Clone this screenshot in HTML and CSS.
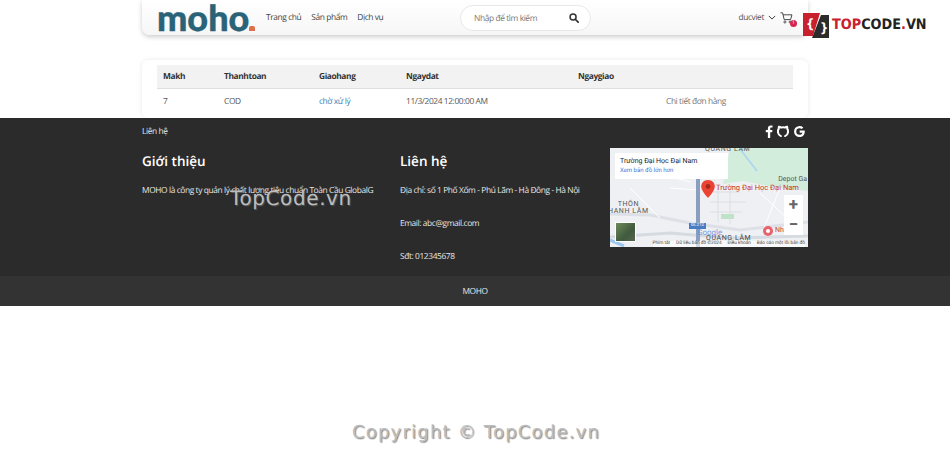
FILE: index.html
```html
<!DOCTYPE html>
<html lang="vi">
<head>
  <meta charset="UTF-8" />
  <meta name="viewport" content="width=device-width, initial-scale=1.0"/>
  <title>MOHO - Đơn hàng</title>
  <link rel="stylesheet" href="styles.css">
</head>
<body>
  <header class="topbar">
    <div class="brand">moho<i class="brand-dot"></i></div>
    <nav class="menu">
      <a href="#">Trang chủ</a>
      <a href="#">Sản phẩm</a>
      <a href="#">Dịch vụ</a>
    </nav>
    <form class="search">
      <span class="search-text">Nhập để tìm kiếm</span>
      <svg class="search-icon" viewBox="0 0 16 16" width="10" height="10">
        <circle cx="6.5" cy="6.5" r="4.8" fill="none" stroke="#333" stroke-width="2.4"/>
        <path d="M10 10l4.6 4.6" stroke="#333" stroke-width="2.8" stroke-linecap="round"/>
      </svg>
    </form>
    <div class="account">
      <span>ducviet</span>
      <svg viewBox="0 0 12 8" width="8" height="5">
        <path d="M1 1.500l5 5 5-5" fill="none" stroke="#333" stroke-width="1.500"/>
      </svg>
      <span class="cart">
        <svg viewBox="0 0 16 15" width="13" height="12">
          <path d="M.5 1h2.600l2 8.500h8l1.700-6H3.700" fill="none" stroke="#333" stroke-width="1.100"/>
          <circle cx="6" cy="12.500" r="1.300" fill="none" stroke="#333"/>
          <circle cx="12.500" cy="12.500" r="1.300" fill="none" stroke="#333"/>
        </svg>
        <b class="cart-count">1</b>
      </span>
    </div>
  </header>

  <main class="orders">
    <table class="order-table">
      <thead>
        <tr>
          <th class="c-id">Makh</th>
          <th class="c-pay">Thanhtoan</th>
          <th class="c-ship">Giaohang</th>
          <th class="c-date">Ngaydat</th>
          <th class="c-due">Ngaygiao</th>
          <th></th>
        </tr>
      </thead>
      <tbody>
        <tr>
          <td>7</td>
          <td>COD</td>
          <td><a class="status" href="#">chờ xử lý</a></td>
          <td>11/3/2024 12:00:00 AM</td>
          <td></td>
          <td><a class="detail" href="#">Chi tiết đơn hàng</a></td>
        </tr>
      </tbody>
    </table>
  </main>

  <footer class="footer">
    <div class="footer-inner">
      <div class="footer-top">
        <a href="#">Liên hệ</a>
        <div class="socials">
          <svg viewBox="0 0 10 16" width="8" height="13">
            <path d="M6.500 16V9h2.400l.4-2.800H6.500V4.500c0-.8.300-1.400 1.400-1.400h1.500V.6C9 .5 8.200.4 7.200.4 5 .4 3.600 1.700 3.600 4.100v2.100H1V9h2.600v7z" fill="#fff"/>
          </svg>
          <svg viewBox="0 0 16 16" width="12" height="12">
            <path d="M5.200 14.800c-2.500-1-4-3.400-4-6.200 0-1.300.4-2.500 1.100-3.400-.2-.9-.1-1.900.3-2.900 1 .1 1.900.5 2.700 1.100a8 8 0 0 1 5.400 0c.8-.6 1.700-1 2.700-1.100.4 1 .5 2 .3 2.900.7.900 1.100 2.100 1.100 3.400 0 2.800-1.500 5.200-4 6.200" fill="none" stroke="#fff" stroke-width="2.600" stroke-linecap="round"/>
          </svg>
          <svg viewBox="0 0 16 16" width="13" height="13">
            <path d="M14.200 6.800H8.200v2.600h3.400c-.4 1.700-1.800 2.700-3.500 2.700a4.100 4.100 0 0 1 0-8.200c1.100 0 2 .4 2.700 1l1.900-1.900A6.800 6.800 0 0 0 8.100 1.200a6.800 6.800 0 1 0 0 13.600c3.700 0 6.400-2.600 6.400-6.800 0-.4 0-.8-.3-1.200z" fill="#fff"/>
          </svg>
        </div>
      </div>
      <div class="footer-cols">
        <section class="col-about">
          <h3>Giới thiệu</h3>
          <p>MOHO là công ty quản lý chất lượng tiêu chuẩn Toàn Cầu GlobalG</p>
        </section>
        <section class="col-contact">
          <h3>Liên hệ</h3>
          <p>Địa chỉ: số 1 Phố Xốm - Phú Lãm - Hà Đông - Hà Nội</p>
          <p>Email: abc@gmail.com</p>
          <p>Sđt: 012345678</p>
        </section>
        <div class="map">
          <svg class="map-ground" viewBox="0 0 198 99" width="198" height="99">
            <rect width="198" height="99" fill="#eef0f3"/>
            <path d="M120 0h78v43l-35-4-30-6-20 3z" fill="#d3eddc"/>
            <path d="M130 1l17 22" fill="none" stroke="#a9d3ef" stroke-width="1.500"/>
            <path d="M0 66l40 1 40 8 50 7 68-8" fill="none" stroke="#dde1e7" stroke-width="3"/>
            <path d="M0 89l60-4 60 5 78-2" fill="none" stroke="#d6dae1" stroke-width="3"/>
            <path d="M30 20l50 14M60 40l28 2M20 40l30 30M150 45l30 28M170 40l-16 40" fill="none" stroke="#fff"/>
            <path d="M88 30v69" fill="none" stroke="#8a9fc0" stroke-width="4"/>
            <path d="M100 44h30M100 54h36M100 64h32M108 40v34M120 40v36" fill="none" stroke="#dcdfe4"/>
            <rect x="111" y="66" width="13" height="5" fill="#bfe3c6"/>
            <path d="M0 92l14 6" stroke="#9cc7ee" stroke-width="3"/>
            <path d="M98 32c-4.500 0-6.800 3.200-6.800 6.600 0 4.500 6.800 11.400 6.800 11.400s6.800-6.900 6.800-11.400C104.800 35.200 102.500 32 98 32z" fill="#ea4335"/>
            <circle cx="98" cy="38.500" r="2.400" fill="#a52714"/>
            <circle cx="158" cy="83" r="5" fill="#e8626d"/>
            <circle cx="158" cy="83" r="2" fill="#fff"/>
          </svg>
          <div class="map-card">
            <span class="map-title">Trường Đại Học Đại Nam</span>
            <a href="#">Xem bản đồ lớn hơn</a>
          </div>
          <span class="map-label pin-label">Trường Đại Học Đại Nam</span>
          <span class="map-label place-top">QUANG LÂM</span>
          <span class="map-label place-left">THÔN<br>HANH LÂM</span>
          <span class="map-label place-low">QUANG LÂM</span>
          <span class="map-label depot">Depot Ga</span>
          <span class="map-label near">Nh</span>
          <span class="map-label shield">ĐL218</span>
          <span class="map-label google">Google</span>
          <div class="map-zoom"><span>+</span><span>−</span></div>
          <div class="map-thumb"></div>
          <div class="map-legal">
            <span>Phím tắt</span><span>Dữ liệu bản đồ ©2024</span><span>Điều khoản</span><span>Báo cáo một lỗi bản đồ</span>
          </div>
        </div>
      </div>
    </div>
    <div class="footer-bar">MOHO</div>
  </footer>

  <!-- site stamps laid over the page -->
  <div class="stamp-logo">
    <svg viewBox="0 0 26 26" width="26" height="26">
      <path d="M0 1h17L10 24H0z" fill="#c8202c"/>
      <path d="M18 3h8v23H9z" fill="#2b2b2b"/>
      <text x="3" y="16" font-size="13" font-weight="700" fill="#fff">{</text>
      <text x="17" y="20" font-size="13" font-weight="700" fill="#fff">}</text>
    </svg>
    <span class="stamp-top">TOP</span><span class="stamp-code">CODE</span><span class="stamp-top">.</span><span class="stamp-code">VN</span>
  </div>
  <div class="stamp-mid">TopCode.vn</div>
  <div class="stamp-copy">Copyright © TopCode.vn</div>
</body>
</html>
```

FILE: styles.css
```css
body {
  margin: 0;
  font-family: 'Open Sans', 'Noto Sans', sans-serif;
  font-size: 8.400px;
  letter-spacing: -0.400px;
  text-rendering: geometricPrecision;
  color: #555;
  background: #fff;
}
a { text-decoration: none; color: inherit; }

.topbar {
  display: flex;
  align-items: center;
  width: 666px;
  height: 35px;
  margin: 0 auto 0 142px;
  padding: 0 15px;
  box-sizing: border-box;
  border-radius: 0 0 8px 8px;
  background: linear-gradient(#fff, #f6f6f6);
  box-shadow: 0 2px 5px rgba(0,0,0,0.2);
}
.brand {
  display: flex;
  align-items: flex-end;
  width: 109px;
  height: 35px;
  font-family: 'Lato', sans-serif;
  font-weight: 900;
  font-size: 36px;
  line-height: 35px;
  letter-spacing: 0;
  color: #2a6278;
  -webkit-text-stroke: 0.4px #2a6278;
}
.brand-dot {
  width: 6px;
  height: 5px;
  margin: 0 0 4px 0;
  border-radius: 2px 2px 0 0;
  background: #e0704a;
}
.menu {
  display: flex;
  gap: 10px;
  color: #444;
  width: 194px;
}
.search {
  display: flex;
  align-items: center;
  justify-content: space-between;
  width: 131px;
  height: 26px;
  margin-top: 1px;
  padding: 0 11px 0 13px;
  box-sizing: border-box;
  border: 1px solid #e8e8e8;
  border-radius: 13px;
  background: #fff;
}
.search-text { color: #777; }
.account {
  display: flex;
  align-items: center;
  gap: 4px;
  margin-left: auto;
  color: #555;
}
.cart { position: relative; display: flex; }
.cart-count {
  position: absolute;
  right: -4px;
  bottom: -3px;
  width: 7px;
  height: 7px;
  border-radius: 50%;
  background: #d4264f;
  color: #fff;
  font-size: 5px;
  line-height: 7px;
  letter-spacing: 0;
  text-align: center;
  font-weight: 400;
}

.orders {
  width: 666px;
  height: 58px;
  margin: 25px 0 0 142px;
  padding-top: 5px;
  box-sizing: border-box;
  border-radius: 6px;
  background: #fff;
  box-shadow: 0 0 5px rgba(0,0,0,0.09);
}
.order-table {
  width: 636px;
  margin-left: 15px;
  border-collapse: collapse;
  table-layout: fixed;
}
.order-table th, .order-table td {
  padding: 0 6px;
  text-align: left;
}
.order-table th {
  height: 23px;
  background: #f2f2f2;
  border-bottom: 1px solid #dedede;
  color: #333;
  font-weight: 700;
}
.order-table td { height: 24px; color: #555; }
.c-id { width: 49px; }
.c-pay { width: 83px; }
.c-ship { width: 75px; }
.c-date { width: 160px; }
.c-due { width: 76px; }
.status { color: #3a85b8; }
.detail { color: #777; }

.footer {
  height: 188px;
  background: #2b2b2b;
  color: #e6e6e6;
}
.footer-inner {
  width: 666px;
  height: 158px;
  margin-left: 142px;
}
.footer-top {
  display: flex;
  justify-content: space-between;
  align-items: center;
  height: 26px;
  margin-bottom: 4px;
}
.socials {
  display: flex;
  align-items: center;
  gap: 4px;
  margin-right: 2px;
}
.footer-cols {
  display: flex;
}
.col-about { width: 258px; }
.col-contact { width: 210px; }
.footer h3 {
  margin: 4px 0 14px;
  font-size: 13.500px;
  line-height: 19px;
  font-weight: 600;
  letter-spacing: 0;
  color: #fff;
}
.footer p {
  margin: 0 0 21px;
  line-height: 12px;
}
.footer-bar {
  height: 30px;
  line-height: 31px;
  background: #333;
  text-align: center;
}

/* map widget: everything inside sits on the map canvas */
.map {
  position: relative;
  width: 198px;
  height: 99px;
  overflow: hidden;
  letter-spacing: 0;
}
.map-ground { display: block; }
.map-card {
  position: absolute;
  left: 5px;
  top: 5px;
  width: 113px;
  height: 26px;
  padding: 4px 0 0 5px;
  box-sizing: border-box;
  background: #fff;
  color: #222;
  font-family: 'Roboto', sans-serif;
  font-size: 7px;
  line-height: 9px;
}
.map-title { display: block; }
.map-card a { display: block; font-size: 6px; color: #3a78d8; }
.map-label {
  position: absolute;
  color: #555;
  font-family: 'Roboto', sans-serif;
  font-size: 7px;
  line-height: 7px;
  white-space: nowrap;
}
.pin-label { left: 106px; top: 36px; color: #c5392c; font-size: 7.500px; }
.place-top { left: 95px; top: -2px; letter-spacing: 0.6px; }
.place-left { left: -2px; top: 53px; letter-spacing: 0.6px; text-align: center; }
.place-low { left: 96px; top: 87px; letter-spacing: 0.6px; color: #444; }
.depot { right: 1px; top: 28px; }
.near { left: 165px; top: 79px; color: #c5392c; }
.shield {
  left: 79px;
  top: 75px;
  width: 17px;
  height: 6px;
  background: #4a7cc4;
  color: #fff;
  font-size: 4.500px;
  line-height: 6px;
  text-align: center;
}
.google { left: 87px; top: 81px; color: #5b8de0; font-size: 8px; line-height: 8px; opacity: 0.8; }
.map-zoom {
  position: absolute;
  right: 5px;
  top: 47px;
  display: flex;
  flex-direction: column;
  width: 19px;
  height: 40px;
  background: #fff;
  color: #666;
  font-family: 'Roboto', sans-serif;
  font-size: 17px;
  font-weight: 700;
  line-height: 20px;
  text-align: center;
}
.map-thumb {
  position: absolute;
  left: 5px;
  top: 74px;
  width: 19px;
  height: 18px;
  border: 1px solid #fff;
  background: linear-gradient(135deg, #6f8a5c, #3f5a3d 60%, #556650);
}
.map-legal {
  position: absolute;
  right: 3px;
  bottom: 0;
  display: flex;
  gap: 6px;
  font-family: 'Roboto', sans-serif;
  font-size: 4.700px;
  line-height: 6px;
  color: #444;
  background: rgba(255,255,255,0.6);
}

/* site stamps */
.stamp-logo {
  position: absolute;
  left: 803px;
  top: 12px;
  display: flex;
  align-items: center;
  font-family: 'DejaVu Sans', sans-serif;
  font-stretch: condensed;
  font-weight: 700;
  font-size: 14.300px;
  letter-spacing: 0;
}
.stamp-logo svg { margin-right: 3px; }
.stamp-top { color: #c8202c; }
.stamp-code { color: #222; }
.stamp-mid {
  position: absolute;
  left: 230px;
  top: 185px;
  font-family: 'DejaVu Sans', sans-serif;
  font-size: 20px;
  line-height: 26px;
  letter-spacing: 0.6px;
  color: #bdbdbd;
  text-shadow: 1px 1px 1px #555;
}
.stamp-copy {
  position: absolute;
  left: 352px;
  top: 420px;
  font-family: 'DejaVu Sans', sans-serif;
  font-size: 18px;
  line-height: 26px;
  letter-spacing: 1.200px;
  color: #bdbdbd;
  text-shadow: 1px 1px 1px #888;
}
```
